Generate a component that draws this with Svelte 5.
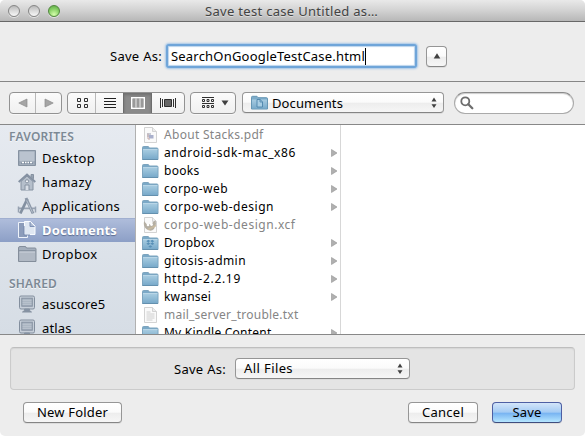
<script>
  const favorites = [
    { name: 'Desktop', icon: 'desktop', w: 53 },
    { name: 'hamazy', icon: 'home', w: 50 },
    { name: 'Applications', icon: 'apps', w: 78 },
    { name: 'Documents', icon: 'docs', w: 75, selected: true },
    { name: 'Dropbox', icon: 'folder', w: 55.5 },
  ];
  const shared = [
    { name: 'asuscore5', icon: 'pc', w: 63.5 },
    { name: 'atlas', icon: 'pc', w: 29.5 },
  ];
  const files = [
    { name: 'About Stacks.pdf', kind: 'pdf', w: 99.5 },
    { name: 'android-sdk-mac_x86', kind: 'folder', w: 132 },
    { name: 'books', kind: 'folder', w: 35.5 },
    { name: 'corpo-web', kind: 'folder', w: 64 },
    { name: 'corpo-web-design', kind: 'folder', w: 110 },
    { name: 'corpo-web-design.xcf', kind: 'xcf', w: 131.5 },
    { name: 'Dropbox', kind: 'dropbox', w: 51 },
    { name: 'gitosis-admin', kind: 'folder', w: 82 },
    { name: 'httpd-2.2.19', kind: 'folder', w: 77 },
    { name: 'kwansei', kind: 'folder', w: 47 },
    { name: 'mail_server_trouble.txt', kind: 'txt', w: 134.5 },
    { name: 'My Kindle Content', kind: 'folder', w: 107.5 },
  ];
  const isFolder = (f) => f.kind === 'folder' || f.kind === 'dropbox';

  // Tracks a label so that it sets to its designed width.
  function track(node, width) {
    const natural = node.getBoundingClientRect().width;
    node.style.letterSpacing = `${(width - natural) / node.textContent.length}px`;
  }
</script>

{#snippet label(text, w)}<span class="label" use:track={w}>{text}</span>{/snippet}

{#snippet updown()}
  <svg class="updown" width="6" height="12" viewBox="0 0 6 12"><path d="M3 0.5 5.5 4.5H.5zM3 11 5.5 7.3H.5z" fill="#404040" /></svg>
{/snippet}

{#snippet sideIcon(kind)}
  <svg class="side-icon" width="20" height="20" viewBox="0 0 20 20" fill="none" stroke="#8692a1" stroke-width="1">
    {#if kind === 'desktop'}
      <path d="M1.500 2.500h17v15h-17z" fill="#98a4b3" />
      <path d="M2.500 3.500h15v9l-1 1h-13l-1-1z" fill="#bac3cf" stroke="none" />
      <path d="M3 16.500 5 13h10l2 3.500z" fill="#8290a2" stroke="#aeb8c5" stroke-width=".6" />
      <path d="M5 14.500h2m1 0h1.500m1 0H12m1 0h2" stroke="#fff" stroke-width="1.500" />
    {:else if kind === 'home'}
      <path d="M4 9.500v8.500h12V9.500L10 4z" fill="#b5bfcb" stroke="#8692a1" />
      <path d="M1.700 10 10 2.500 18.300 10" stroke="#8491a2" stroke-width="2" />
      <path d="M14 2.500h2.500v4.300L14 4.700z" fill="#98a4b3" />
      <path d="M8 18v-5h4v5" fill="#d8dee6" /><circle cx="10" cy="9.300" r="1.600" fill="#eef1f5" />
    {:else if kind === 'apps'}
      <path d="M1 12.300h18" stroke="#97a2b1" stroke-width="1.800" />
      <path d="M1.500 10.500v6M18.500 10.500v6" stroke="#97a2b1" stroke-width="1.500" />
      <path d="M3.300 17.500 10.300 3" stroke="#8390a1" stroke-width="2.800" />
      <path d="m9 2 7 15.500" stroke="#8c98a8" stroke-width="3" />
      <path d="m9.700 4.500 5.800 12" stroke="#c3ccd7" stroke-width=".8" />
    {:else if kind === 'docs'}
      <path d="M1.500 2.500h7l2 3v12h-9z" fill="#8c9cba" stroke="#eef3fa" />
      <path d="M7.500 1.500h6l4.500 4.500v8.500H7.500z" fill="#dfe7f2" stroke="#f8fbff" />
      <path d="M13 2v4.500h4.500" fill="#a9b7cf" stroke="#7e91b6" />
      <path d="M7 6v9h6" stroke="#7588ad" />
    {:else if kind === 'folder'}
      <path d="M1.500 17.500V4q0-1.500 1.500-1.500h5q1.200 0 1.500 1.500h8.500q1 0 1 1v12.500z" fill="#a5afbc" stroke="#848e9b" />
      <path d="M2 6.800h16.500" stroke="#7e8997" /><path d="M2.500 8h15.500v9H2.500z" fill="#b1b9c4" stroke="none" />
      <path d="M2.500 8h15.500" stroke="#ced4dc" />
    {:else}
      <rect x="2.500" y="2" width="15" height="13" rx="1.500" fill="#c6ced8" stroke="#838f9e" />
      <rect x="4.800" y="4.200" width="10.500" height="8" fill="#a3aebc" />
      <path d="M5.500 6.200h9m-9 2h9m-9 2h9" stroke="#c2cad4" />
      <path d="M7.500 15h5v1.500l2 1.500h-9l2-1.500z" fill="#8592a4" />
    {/if}
  </svg>
{/snippet}

{#snippet fileIcon(kind)}
  <svg class="file-icon" width="17" height="16" viewBox="0 0 17 16">
    {#if kind === 'folder' || kind === 'dropbox'}
      <path d="M.5 14.500V2.500q0-1 1-1h4.700q.8 0 .8 1.500h8q1 0 1 1v10.500z" fill="#7ba9c7" stroke="#7da4be" />
      <path d="M1 4.500h14.500V14H1z" fill="url(#folderFill)" />
      <path d="M1 4.500h14.500" stroke="#b9d6e7" /><path d="M.5 14.500h15.500" stroke="#6490ae" />
      {#if kind === 'dropbox'}
        <path d="m8.300 6 2-1.200 2 1.500-2 1.200zm0 0-2-1.200-2 1.500 2 1.200zm0 2.500 2-1 2 1.300-2 1.300zm0 0-2-1-2 1.300 2 1.300zm-2 3 2-1.300 2 1.300-2 1.300z" fill="#5990b7" />
      {/if}
    {:else}
      <path d="M2.500.5h8l4 4v11h-12z" fill="#fafafa" stroke="#d3d3d3" />
      <path d="M10.500.5v4h4" fill="#ececec" stroke="#d3d3d3" />
      {#if kind === 'pdf'}
        <path d="M5 6h4v4H5z" fill="#c8ccd6" /><path d="M7 8h4.500v3.500H7z" fill="#a9b0cc" /><path d="M6 6.500v5.500h2" stroke="#c5aaaa" fill="none" />
      {:else if kind === 'xcf'}
        <path d="m2 4 3 3.500 4-.500 4.500-4 .5 4-2 5q-3 3-7 .500T2 4z" fill="#b5afa3" />
        <circle cx="6" cy="8" r="1.300" fill="#fff" /><circle cx="9.500" cy="7.500" r="1.400" fill="#fff" />
        <path d="m6 12.500 8-4" stroke="#c9ba9f" stroke-width="1.500" />
      {:else}
        <path d="M4.500 5h4m-4 2h8m-8 2h8m-8 2h8m-8 2h6" stroke="#c4c4c4" stroke-width=".8" />
      {/if}
    {/if}
  </svg>
{/snippet}

<svg width="0" height="0" class="defs">
  <defs><linearGradient id="folderFill" x1="0" y1="0" x2="0" y2="1"><stop stop-color="#a8cce1" /><stop offset="1" stop-color="#79aaca" /></linearGradient></defs>
</svg>

<div class="window">
  <header class="titlebar">
    <div class="lights"><i></i><i></i><i class="green"></i></div>
    <h1>{@render label('Save test case Untitled as…', 173)}</h1>
  </header>

  <section class="name-row">
    <span class="caption">{@render label('Save As:', 52)}</span>
    <div class="field">{@render label('SearchOnGoogleTestCase.html', 194)}<b class="caret"></b></div>
    <button class="btn collapse" aria-label="Collapse"><svg width="8" height="6" viewBox="0 0 8 6"><path d="M4 .3 7.300 5.500H.700z" fill="#404040" /></svg></button>
  </section>

  <nav class="toolbar">
    <div class="seg nav">
      <span><svg width="10" height="10" viewBox="0 0 10 10"><path d="M9 1v8L.8 5z" fill="#a5a5a5" stroke="#8b8b8b" stroke-width=".7" /></svg></span>
      <span><svg width="10" height="10" viewBox="0 0 10 10"><path d="M1 1v8l8.200-4z" fill="#a5a5a5" stroke="#8b8b8b" stroke-width=".7" /></svg></span>
    </div>
    <div class="seg views">
      <span><svg width="12" height="12" viewBox="0 0 12 12" fill="none" stroke="#303030"><path d="M1.500 1.500h3v3h-3zm7 0h3v3h-3zm-7 6h3v3h-3zm7 0h3v3h-3z" /></svg></span>
      <span><svg width="12" height="12" viewBox="0 0 12 12" stroke="#202020"><path d="M0 1.500h12m-12 3h12m-12 3h12m-12 3h12" /></svg></span>
      <span class="on"><svg width="14" height="12" viewBox="0 0 14 12"><path d="M0 0h14v12H0z" fill="#fff" /><path d="M1.500 1.500h11v9h-11z" fill="#777" /><path d="M2 2h2.500v8H2zm3.700 0h2.600v8H5.700zm3.800 0H12v8H9.500z" fill="#999" /><path d="M5 1.500v9m4-9v9" stroke="#fff" /></svg></span>
      <span><svg width="16" height="12" viewBox="0 0 16 12" fill="none" stroke="#303030"><path d="M.5 1v10M2.500 2v8M15.500 1v10M13.500 2v8" /><path d="M4.500 2.500h7v7h-7z" fill="#666" /></svg></span>
    </div>
    <div class="seg action">
      <svg width="12" height="12" viewBox="0 0 12 12" fill="none" stroke="#303030"><path d="M0 .5h12M0 6.500h12" /><path d="M.5 2.500h2v2h-2zm4.500 0h2v2H5zm4.500 0h2v2h-2zM.5 8.500h2v2h-2zm4.500 0h2v2H5zm4.500 0h2v2h-2z" /></svg>
      <svg width="8" height="6" viewBox="0 0 8 6"><path d="M.5.500h7L4 5.500z" fill="#404040" /></svg>
    </div>
    <div class="btn location">
      <svg width="17" height="15" viewBox="0 0 17 15">
        <path d="M.5 14V2.300q0-1 1-1H6l1 1.400h8.500q1 0 1 1V14z" fill="#7dacca" stroke="#6797b5" />
        <path d="M1 4.500h15v9H1z" fill="url(#folderFill)" />
        <path d="M6 4.500h3l2.500 2.300V12H6z" fill="#a9cee4" stroke="#4d84aa" stroke-width=".9" /><path d="M9 4.500v2.500h2.500" fill="none" stroke="#4d84aa" stroke-width=".8" />
      </svg>
      {@render label('Documents', 71)}
      {@render updown()}
    </div>
    <div class="search"><svg width="14" height="14" viewBox="0 0 14 14" fill="none" stroke="#6d6d6d"><circle cx="5.300" cy="5.300" r="4" stroke-width="1.800" /><path d="m8.300 8.300 4 4" stroke-width="2.300" stroke-linecap="round" /></svg></div>
  </nav>

  <main class="browser">
    <aside>
      <h2>{@render label('FAVORITES', 65)}</h2>
      {#each favorites as f}
        <div class="place" class:selected={f.selected}>{@render sideIcon(f.icon)}{@render label(f.name, f.w)}</div>
      {/each}
      <h2 class="second">{@render label('SHARED', 48)}</h2>
      {#each shared as f}
        <div class="place">{@render sideIcon(f.icon)}{@render label(f.name, f.w)}</div>
      {/each}
    </aside>
    <div class="column">
      {#each files as f}
        <div class="file" class:dim={!isFolder(f)}>
          {@render fileIcon(f.kind)}{@render label(f.name, f.w)}
          {#if isFolder(f)}<svg class="arrow" width="7" height="8" viewBox="0 0 7 8"><path d="M.5.500 6 4 .500 7.500z" fill="#b0b0b0" stroke="#949494" stroke-width=".6" /></svg>{/if}
        </div>
      {/each}
    </div>
  </main>

  <footer>
    <div class="group">
      <span class="caption">{@render label('Save As:', 52)}</span>
      <div class="btn format">{@render label('All Files', 49)}{@render updown()}</div>
    </div>
    <div class="actions">
      <button class="btn new">{@render label('New Folder', 71)}</button>
      <button class="btn cancel">{@render label('Cancel', 42)}</button>
      <button class="btn save">{@render label('Save', 29)}</button>
    </div>
  </footer>
</div>

<style>
  :global(body) { background: #fff; }
  .defs { position: absolute; }
  .window, .window * { box-sizing: border-box; }
  .window {
    width: 585px; height: 436px; overflow: hidden; display: flex; flex-direction: column;
    background: #ededed; border-radius: 5px; color: #000;
    font: 13px/18px 'Noto Sans', 'Open Sans', sans-serif;
  }
  .label { white-space: pre; flex: none; }
  svg { display: block; flex: none; }
  h1, h2 { margin: 0; font-size: inherit; font-weight: normal; }

  .titlebar {
    height: 22px; flex: none; display: flex; align-items: center;
    background: linear-gradient(#e9e9e9, #d2d2d2 50%, #b7b7b7); border-bottom: 1px solid #686868;
  }
  .lights { display: flex; gap: 8px; padding-left: 8px; width: 205px; }
  .lights i {
    width: 12px; height: 12px; border-radius: 50%; border: 1px solid #858585;
    background: linear-gradient(#b9b9b9, #dedede 55%, #f8f8f8); box-shadow: 0 1px 0 #e2e2e2;
  }
  .lights .green { border-color: #51873e; background: radial-gradient(circle at 50% 85%, #d5ffac, #83cd62 60%, #5aa544); }
  h1 { color: #434343; text-shadow: 0 1px 0 #ddd; }

  .name-row { height: 60px; flex: none; display: flex; align-items: center; padding: 9px 0 0 110px; border-bottom: 1px solid #868686; }
  .name-row .caption { width: 56px; }
  .field {
    width: 251px; height: 24px; margin-top: -1px; padding-left: 3px; display: flex; align-items: center;
    background: #fff; border: 2px solid #6fa5d9; border-radius: 3px;
    box-shadow: 0 0 2px 1px #a4c6e8, inset 0 0 1px 1px #bbd4ed;
  }
  .field .label { padding-top: 1px; }
  .caret { width: 1px; height: 17px; margin-top: 1px; background: #000; }
  .btn {
    height: 21px; border: 1px solid #969696; border-bottom-color: #858585; border-radius: 4px; padding: 0;
    display: flex; align-items: center; justify-content: center; flex: none;
    background: linear-gradient(#fff, #fbfbfb 48%, #ededed 54%, #f6f6f6); box-shadow: 0 1px 0 #dcdcdc;
    font: inherit; color: #000;
  }
  .collapse { width: 21px; margin-left: 9px; }

  .toolbar { height: 43px; flex: none; display: flex; align-items: flex-start; padding: 10px 0 0 9px; border-bottom: 1px solid #888; }
  .seg {
    height: 22px; display: flex; flex: none; overflow: hidden;
    border: 1px solid #929292; border-radius: 4px; background: linear-gradient(#fbfbfb, #f0f0f0); box-shadow: 0 1px 0 #f7f7f7;
  }
  .seg span { flex: 1; display: flex; align-items: center; justify-content: center; }
  .seg span + span { border-left: 1px solid #b8b8b8; }
  .nav { width: 53px; margin-right: 5px; }
  .views { width: 118px; margin-right: 5px; }
  .views span { flex: 0 0 28px; }
  .views span:first-child { flex-basis: 27px; }
  .views span:last-child { flex: 1; }
  .seg span.on { background: #8a8a8a; border-color: #6d6d6d; box-shadow: inset 0 2px 3px #707070; }
  .seg span.on + span { border-color: #6d6d6d; }
  .action { width: 46px; align-items: center; padding-left: 11px; gap: 7px; margin-right: 6px; }
  .location { width: 202px; justify-content: flex-start; padding-left: 8px; gap: 4px; }
  .updown { margin: 0 6px 0 auto; }
  .search {
    width: 120px; height: 22px; margin-left: 10px; padding-left: 5px; display: flex; align-items: center;
    background: #fff; border: 1px solid #aaa; border-top-color: #8a8a8a; border-radius: 11px; box-shadow: inset 0 1px 1px #ccc;
  }

  .browser { height: 210px; flex: none; display: flex; overflow: hidden; background: #fff; border-bottom: 1px solid #888; }
  aside { width: 136px; height: 209px; overflow: hidden; flex: none; background: linear-gradient(#e6eaf0, #d6dde5); border-right: 1px solid #b1b1b1; }
  h2 { height: 21px; padding: 3px 0 0 9px; font-size: 12px; font-weight: 600; color: #7d8995; text-shadow: 0 1px 0 #f5f7fa; }
  h2.second { height: 26px; padding-top: 9px; }
  .place { height: 24px; display: flex; align-items: center; padding-left: 17px; gap: 5px; }
  .place .label { padding-bottom: 1px; }
  .selected { color: #fff; font-weight: 700; background: linear-gradient(#b0bedc, #8c9fc6); box-shadow: inset 0 1px 0 #a0afd0; text-shadow: 0 1px 1px #5c6c90; }

  .column { width: 205px; height: 209px; overflow: hidden; border-right: 1px solid #d7d7d7; font-size: 12px; }
  .file { height: 18px; display: flex; align-items: center; padding-left: 6px; gap: 5px; }
  .file-icon { margin-top: 1px; }
  .file .label { padding-top: 1px; }
  .dim { color: #858585; }
  .arrow { margin: 1px 2px 0 auto; }

  footer { padding: 12px 23px 0; }
  .group {
    height: 43px; margin: 0 -13px; padding-left: 163px; display: flex; align-items: center;
    background: #e4e4e4; border: 1px solid #cbcbcb; border-top-color: #bebebe; border-radius: 4px; box-shadow: inset 0 1px 1px #d5d5d5;
  }
  .group .caption { width: 61px; padding-top: 1px; }
  .format { width: 175px; justify-content: flex-start; padding-left: 8px; }
  .format .label { padding-bottom: 1px; }
  .actions { display: flex; padding-top: 12px; }
  .actions .label { padding-bottom: 1px; }
  .new { width: 99px; }
  .cancel { width: 70px; margin-left: auto; margin-right: 14px; }
  .save { width: 70px; border-color: #4e5fa3; border-bottom-color: #3f4d7e; background: linear-gradient(#d3e5f9, #a4cbf4 48%, #78b4f2 54%, #b5e6ff); }
</style>
